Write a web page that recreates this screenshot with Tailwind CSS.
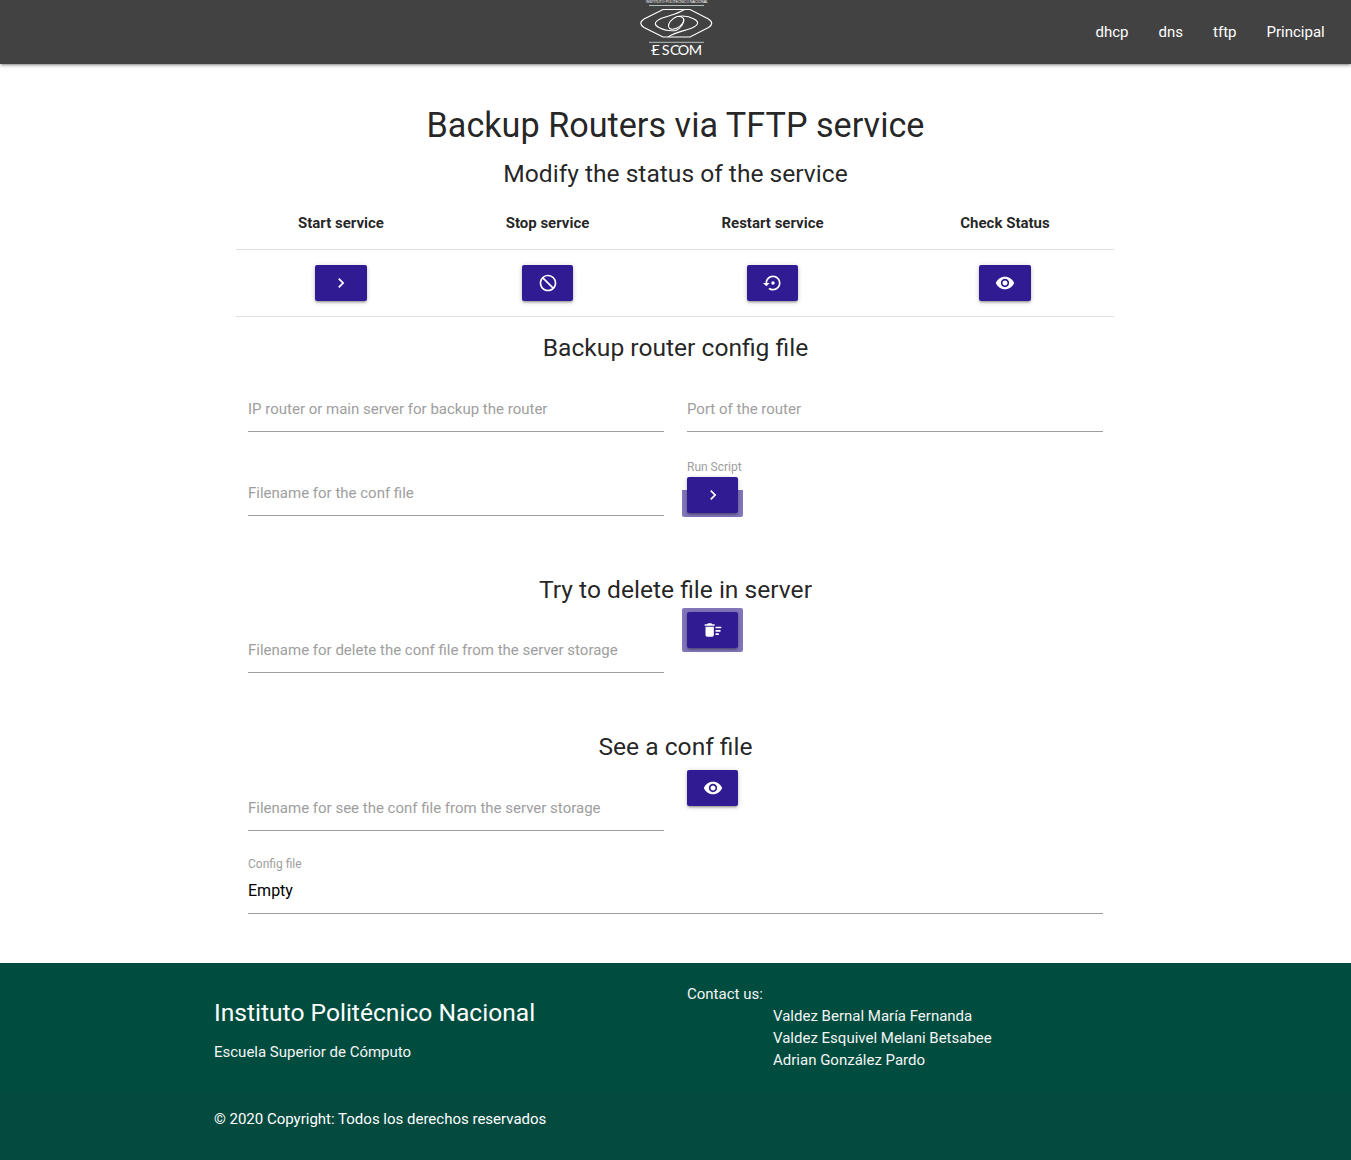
<!DOCTYPE html>
<html lang="es">
<head>
<meta charset="utf-8">
<title>TFTP</title>
<script src="https://cdn.jsdelivr.net/npm/@tailwindcss/browser@4"></script>
</head>
<body class="bg-white font-[Roboto,sans-serif] text-[15px] leading-[22.5px] text-black/87">
<svg class="hidden">
  <symbol id="chev" viewBox="0 0 24 24"><path d="M10 6 8.590 7.410 13.170 12l-4.580 4.590L10 18l6-6z"/></symbol>
  <symbol id="block" viewBox="0 0 24 24"><path transform="matrix(-1 0 0 1 24 0)" d="M12 2C6.480 2 2 6.480 2 12s4.480 10 10 10 10-4.480 10-10S17.520 2 12 2zM4 12c0-4.420 3.580-8 8-8 1.850 0 3.550.630 4.900 1.690L5.690 16.900C4.630 15.550 4 13.850 4 12zm8 8c-1.850 0-3.550-.630-4.900-1.690L18.310 7.100C19.370 8.450 20 10.150 20 12c0 4.420-3.580 8-8 8z"/></symbol>
  <symbol id="restore" viewBox="0 0 24 24"><path d="M14 12c0-1.100-.9-2-2-2s-2 .9-2 2 .9 2 2 2 2-.9 2-2zm-2-9c-4.970 0-9 4.030-9 9H0l4 4 4-4H5c0-3.870 3.130-7 7-7s7 3.130 7 7-3.130 7-7 7c-1.510 0-2.910-.49-4.060-1.300l-1.420 1.440C8.040 20.300 9.940 21 12 21c4.970 0 9-4.030 9-9s-4.030-9-9-9z"/></symbol>
  <symbol id="eye" viewBox="0 0 24 24"><path d="M12 4.500C7 4.500 2.730 7.610 1 12c1.730 4.390 6 7.500 11 7.500s9.270-3.110 11-7.500c-1.730-4.390-6-7.500-11-7.500zM12 17c-2.760 0-5-2.240-5-5s2.240-5 5-5 5 2.240 5 5-2.240 5-5 5zm0-8c-1.660 0-3 1.340-3 3s1.340 3 3 3 3-1.340 3-3-1.340-3-3-3z"/></symbol>
  <symbol id="sweep" viewBox="0 0 24 24"><path d="M15 16h4v2h-4zm0-8h7v2h-7zm0 4h6v2h-6zM3 18c0 1.100.9 2 2 2h6c1.100 0 2-.9 2-2V8H3v10zM14 5h-3l-1-1H6L5 5H2v2h12z"/></symbol>
</svg>

<header class="relative flex h-16 items-center justify-end gap-[30px] bg-[#424242] pr-[26.300px] text-white shadow-[0_2px_2px_0_rgba(0,0,0,0.14),0_3px_1px_-2px_rgba(0,0,0,0.12),0_1px_5px_0_rgba(0,0,0,0.2)]">
  <svg class="absolute left-[636px] top-0" width="80" height="60" viewBox="0 0 80 60" fill="none" stroke="#fff">
    <text x="10" y="3" font-family="Liberation Sans" font-size="4" textLength="62" lengthAdjust="spacingAndGlyphs" fill="#fff" stroke="none">INSTITUTO POLITÉCNICO NACIONAL</text>
    <path d="M13 5.500H68M13 42.300H68" stroke-width=".8" stroke="#cfe0dc"/>
    <path d="M27 9.500H54L72.500 19Q79 23.300 72.500 27.500L54 37H27L8 27.500Q1.500 23.300 8 19Z" stroke-width="1.200"/>
    <path d="M48.500 9.500C40 15 31 15.500 24 19C18 22 18 25 23 27.500C29 31 35 31 40 30.500C45 28 48.500 23 47.500 19" stroke-width="1.100"/>
    <path d="M32 37C41 31 50 31 57 27.500C63 24.500 63 21.500 58 19C52 15.500 46 15.500 41 16.500C35 19 32 23.500 32.500 26.500C33 29.500 37 30 41 28C46 25.500 49 21 47.500 18.500C46.500 17 45 16.500 43 16.200" stroke-width="1.100"/>
    <text transform="scale(1.15 1)" x="13.500 22.500 29.500 36.300 45.800" y="54.700" font-family="Lato,sans-serif" font-size="12.500" fill="#fff" stroke="none">ESCOM</text>
    <path d="M15 50.500H20" stroke-width="1"/>
  </svg>
  <a>dhcp</a><a>dns</a><a>tftp</a><a>Principal</a>
</header>

<main class="mx-auto h-[899px] w-[879px] text-center">
  <h4 class="pt-[42px] text-[34.200px] leading-[38px]">Backup Routers via TFTP service</h4>
  <h5 class="mt-[16px] text-[24.600px] leading-[27px]">Modify the status of the service</h5>
  <div class="mt-[12px] grid h-[51px] w-[878px] grid-cols-[210px_203px_247px_218px] items-center border-b border-black/12 pb-[2px] font-bold">
    <span>Start service</span><span>Stop service</span><span>Restart service</span><span>Check Status</span>
  </div>
  <div class="grid h-[67px] w-[878px] grid-cols-[210px_203px_247px_218px] items-center justify-items-center border-b border-black/12">
    <button class="flex h-9 w-[51.500px] items-center justify-center rounded-[2px] bg-[#311b92] shadow-[0_2px_2px_0_rgba(0,0,0,0.14),0_3px_1px_-2px_rgba(0,0,0,0.12),0_1px_5px_0_rgba(0,0,0,0.2)]"><svg class="size-5 fill-white"><use href="#chev"/></svg></button>
    <button class="flex h-9 w-[51.500px] items-center justify-center rounded-[2px] bg-[#311b92] shadow-[0_2px_2px_0_rgba(0,0,0,0.14),0_3px_1px_-2px_rgba(0,0,0,0.12),0_1px_5px_0_rgba(0,0,0,0.2)]"><svg class="size-5 fill-white"><use href="#block"/></svg></button>
    <button class="flex h-9 w-[51.500px] items-center justify-center rounded-[2px] bg-[#311b92] shadow-[0_2px_2px_0_rgba(0,0,0,0.14),0_3px_1px_-2px_rgba(0,0,0,0.12),0_1px_5px_0_rgba(0,0,0,0.2)]"><svg class="size-5 fill-white"><use href="#restore"/></svg></button>
    <button class="flex h-9 w-[51.500px] items-center justify-center rounded-[2px] bg-[#311b92] shadow-[0_2px_2px_0_rgba(0,0,0,0.14),0_3px_1px_-2px_rgba(0,0,0,0.12),0_1px_5px_0_rgba(0,0,0,0.2)]"><svg class="size-5 fill-white"><use href="#eye"/></svg></button>
  </div>
  <h5 class="mt-[17px] text-[24.600px] leading-[27px]">Backup router config file</h5>

  <div class="mt-[26px] grid grid-cols-2 gap-x-[23px] px-[12px] text-left text-[#9e9e9e]">
    <div class="h-[45px] w-[416px] border-b border-[#9e9e9e] pt-[11px]">IP router or main server for backup the router</div>
    <div class="h-[45px] w-[416px] border-b border-[#9e9e9e] pt-[11px]">Port of the router</div>
  </div>
  <div class="mt-[24px] grid grid-cols-2 gap-x-[23px] px-[12px] text-left text-[#9e9e9e]">
    <div class="h-[60px] w-[416px] border-b border-[#9e9e9e] pt-[26px]">Filename for the conf file</div>
    <div>
      <div class="h-[21px] text-[12px] leading-[22px]">Run Script</div>
      <div class="relative w-[51px]">
        <span class="absolute -left-[5px] top-[13px] h-[27px] w-[61px] rounded-b-[2px] bg-[#8376bb]"></span>
        <button class="relative flex h-9 w-[51px] items-center justify-center rounded-[2px] bg-[#311b92] shadow-[0_2px_2px_0_rgba(0,0,0,0.14),0_3px_1px_-2px_rgba(0,0,0,0.12),0_1px_5px_0_rgba(0,0,0,0.2)]"><svg class="size-5 fill-white"><use href="#chev"/></svg></button>
      </div>
    </div>
  </div>

  <h5 class="mt-[60px] text-[24.600px] leading-[27px]">Try to delete file in server</h5>
  <div class="mt-[9px] grid grid-cols-2 gap-x-[23px] px-[12px] text-left text-[#9e9e9e]">
    <div class="h-[61px] w-[416px] border-b border-[#9e9e9e] pt-[27px]">Filename for delete the conf file from the server storage</div>
    <div class="relative w-[51px]">
      <span class="absolute -left-[5px] -top-[4px] h-[44px] w-[61px] rounded-[2px] bg-[#8376bb]"></span>
      <button class="relative flex h-9 w-[51px] items-center justify-center rounded-[2px] bg-[#311b92] shadow-[0_2px_2px_0_rgba(0,0,0,0.14),0_3px_1px_-2px_rgba(0,0,0,0.12),0_1px_5px_0_rgba(0,0,0,0.2)]"><svg class="size-5 fill-white"><use href="#sweep"/></svg></button>
    </div>
  </div>

  <h5 class="mt-[60px] text-[24.600px] leading-[27px]">See a conf file</h5>
  <div class="mt-[10px] grid grid-cols-2 gap-x-[23px] px-[12px] text-left text-[#9e9e9e]">
    <div class="h-[61px] w-[416px] border-b border-[#9e9e9e] pt-[27px]">Filename for see the conf file from the server storage</div>
    <button class="flex h-9 w-[51px] items-center justify-center rounded-[2px] bg-[#311b92] shadow-[0_2px_2px_0_rgba(0,0,0,0.14),0_3px_1px_-2px_rgba(0,0,0,0.12),0_1px_5px_0_rgba(0,0,0,0.2)]"><svg class="size-5 fill-white"><use href="#eye"/></svg></button>
  </div>
  <div class="mx-[12px] mt-[22px] h-[61px] w-[855px] border-b border-[#9e9e9e] text-left">
    <div class="text-[12px] leading-[22px] text-[#9e9e9e]">Config file</div>
    <div class="pt-[4px] text-[16px] leading-[24px] text-black">Empty</div>
  </div>
</main>

<footer class="h-[197px] bg-[#004d40] text-white">
  <div class="grid h-[131px] grid-cols-[473px_1fr] pl-[214px] pt-[20px]">
    <div>
      <h5 class="mt-[16px] text-[24.600px] leading-[27px]">Instituto Politécnico Nacional</h5>
      <p class="mt-[15px] text-[#f5f5f5]">Escuela Superior de Cómputo</p>
    </div>
    <div class="text-[#f5f5f5]">
      <div class="leading-[22px]">Contact us:</div>
      <ul class="pl-[86px] leading-[22px]">
        <li>Valdez Bernal María Fernanda</li>
        <li>Valdez Esquivel Melani Betsabee</li>
        <li>Adrian González Pardo</li>
      </ul>
    </div>
  </div>
  <div class="flex h-[66px] items-center bg-[#333]/8 pb-[16px] pl-[214px]">© 2020 Copyright: Todos los derechos reservados</div>
</footer>
</body>
</html>
